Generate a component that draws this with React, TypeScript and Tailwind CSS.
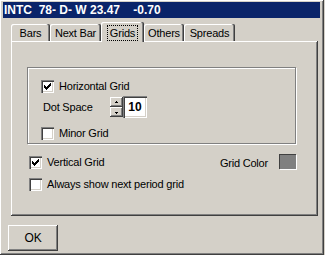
import React from "react";

const raised =
  "shadow-[inset_-1px_-1px_#404040,inset_1px_1px_#ffffff,inset_-2px_-2px_#808080]";

function Check() {
  const cols = [
    [0, 2],
    [1, 3],
    [2, 4],
    [3, 3],
    [4, 2],
    [5, 1],
    [6, 0],
  ];
  return (
    <svg width="7" height="7" viewBox="0 0 7 7" className="block" shapeRendering="crispEdges">
      {cols.map(([x, y]) => (
        <rect key={x} x={x} y={y} width="1" height="3" fill="#000" />
      ))}
    </svg>
  );
}

function CheckBox({ checked, label }: { checked?: boolean; label: string }) {
  return (
    <div className="flex items-center h-[13px]">
      <div className="w-[13px] h-[13px] bg-white shadow-[inset_1px_1px_#808080,inset_2px_2px_#404040,inset_-1px_-1px_#ffffff,inset_-2px_-2px_#d4d0c8] flex items-center justify-center shrink-0">
        {checked && <Check />}
      </div>
      <span className="ml-[5px] leading-[13px]">{label}</span>
    </div>
  );
}

function Arrow({ up }: { up?: boolean }) {
  return (
    <svg width="5" height="3" viewBox="0 0 5 3" className="block" shapeRendering="crispEdges">
      {up ? (
        <>
          <rect x="2" y="0" width="1" height="1" fill="#000" />
          <rect x="1" y="1" width="3" height="1" fill="#000" />
        </>
      ) : (
        <>
          <rect x="1" y="1" width="3" height="1" fill="#000" />
          <rect x="2" y="2" width="1" height="1" fill="#000" />
        </>
      )}
    </svg>
  );
}

function Tab({ label, w, selected }: { label: string; w: number; selected?: boolean }) {
  if (selected) {
    return (
      <div
        style={{ width: w }}
        className="relative z-10 h-[20px] bg-[#d4d0c8] rounded-t-[2px] shadow-[inset_-1px_0_#404040,inset_-2px_0_#808080,inset_1px_1px_#ffffff] flex items-start justify-center pt-[3px]"
      >
        <span className="border border-dotted border-black px-[2px] leading-[12px] h-[16px] flex items-center">
          {label}
        </span>
      </div>
    );
  }
  return (
    <div
      style={{ width: w }}
      className="h-[17px] mb-[1px] rounded-t-[2px] shadow-[inset_-1px_0_#404040,inset_-2px_0_#808080,inset_1px_1px_#ffffff] flex items-center justify-center pt-[1px]"
    >
      {label}
    </div>
  );
}

export default function App() {
  return (
    <div className="w-[325px] h-[255px] bg-[#d4d0c8] text-black text-[11px] tracking-[-0.2px] font-['Liberation_Sans',Arial,sans-serif]">
      <div className="w-[324px] h-[255px] pt-[2px] pl-[3px] pr-[4px] flex flex-col shadow-[inset_-1px_-1px_#404040,inset_1px_1px_#ffffff,inset_-2px_-2px_#808080]">
        {/* Title bar */}
        <div className="h-[16px] bg-[#0a246a] text-white font-bold text-[12px] tracking-normal pl-[1px] flex items-center whitespace-pre leading-none">
          {"INTC  78- D- W 23.47    -0.70"}
        </div>

        {/* Tabs */}
        <div className="mt-[4px] ml-[8px] h-[20px] flex items-end">
          <Tab label="Bars" w={39} />
          <Tab label="Next Bar" w={51} />
          <Tab label="Grids" w={43} selected />
          <Tab label="Others" w={40} />
          <Tab label="Spreads" w={51} />
        </div>

        {/* Panel */}
        <div className="-mt-[1px] ml-[8px] w-[307px] h-[175px] shadow-[inset_-1px_-1px_#404040,inset_1px_1px_#ffffff,inset_-2px_-2px_#808080] flex flex-col">
          {/* Group box */}
          <div className="ml-[16px] mt-[26px] w-[269px] h-[77px] border border-[#808080] shadow-[inset_1px_1px_#ffffff,1px_1px_#ffffff] pl-[13px] flex flex-col">
            <div className="mt-[12px]">
              <CheckBox checked label="Horizontal Grid" />
            </div>
            <div className="mt-[3px] flex items-center h-[22px]">
              <span className="ml-[2px] w-[67px]">Dot Space</span>
              <div className="flex flex-col w-[13px]">
                <div className={`h-[10px] bg-[#d4d0c8] ${raised} flex items-center justify-center`}>
                  <Arrow up />
                </div>
                <div className={`h-[10px] bg-[#d4d0c8] ${raised} flex items-center justify-center`}>
                  <Arrow />
                </div>
              </div>
              <div className="w-[24px] h-[22px] bg-white shadow-[inset_1px_1px_#808080,inset_2px_2px_#404040,inset_-1px_-1px_#ffffff,inset_-2px_-2px_#d4d0c8] flex items-center justify-center font-bold text-[12px] tracking-normal">
                10
              </div>
            </div>
            <div className="mt-[9px]">
              <CheckBox label="Minor Grid" />
            </div>
          </div>

          {/* Vertical grid row */}
          <div className="mt-[11px] ml-[18px] w-[267px] flex items-center justify-between">
            <CheckBox checked label="Vertical Grid" />
            <div className="flex items-center">
              <span className="leading-[13px] mt-[2px]">Grid Color</span>
              <div className="ml-[11px] -mt-[2px] w-[17px] h-[15px] bg-[#808080] shadow-[inset_1px_1px_#404040,1px_1px_#ffffff]" />
            </div>
          </div>
          <div className="mt-[8px] ml-[18px]">
            <CheckBox label="Always show next period grid" />
          </div>
        </div>

        {/* OK button */}
        <div className={`mt-[9px] ml-[5px] w-[50px] h-[26px] ${raised} flex items-center justify-center text-[12px]`}>
          OK
        </div>
      </div>
    </div>
  );
}
